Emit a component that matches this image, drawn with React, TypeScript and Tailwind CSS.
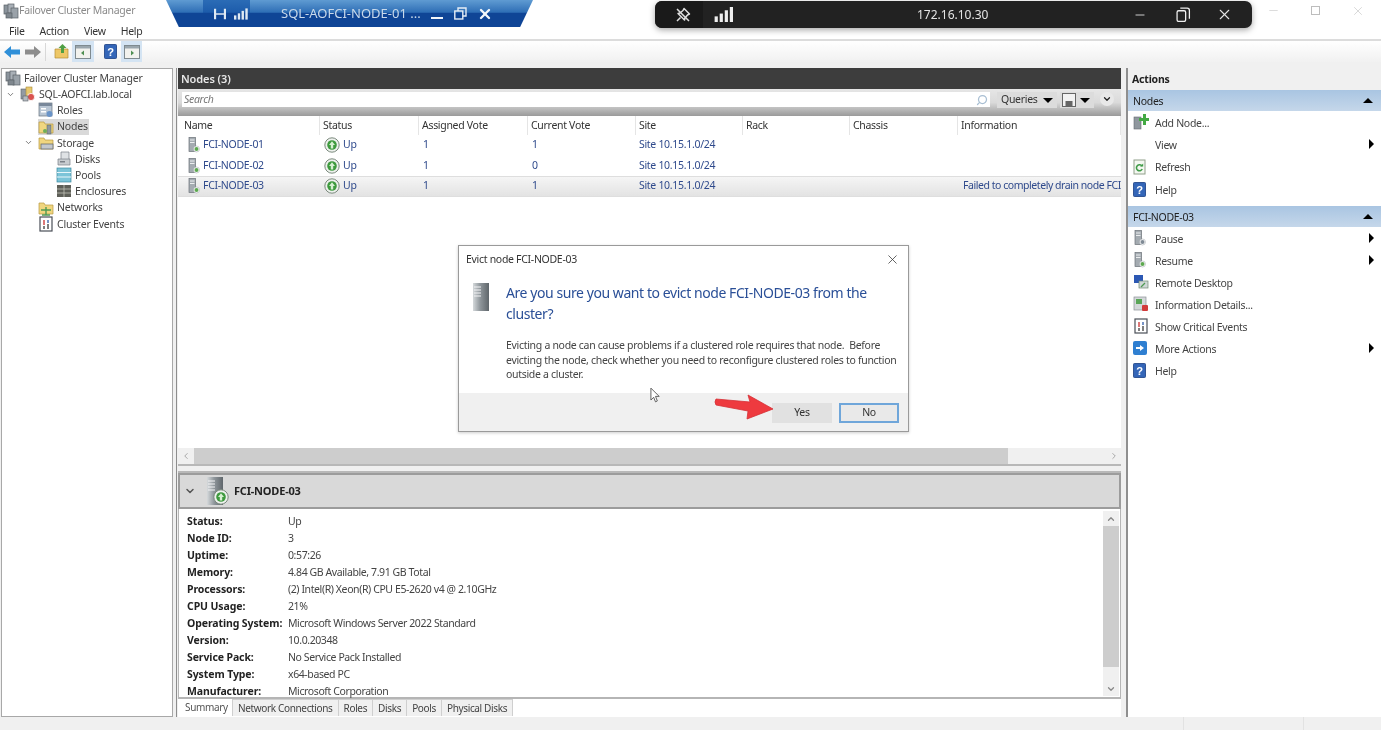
import { ChevronDown, ChevronUp, ChevronLeft, ChevronRight, X, Minus, Search } from "lucide-react";
import type { ReactNode } from "react";

// small shared drawings
function Signal({ className }: { className: string }) {
  return (
    <svg viewBox="0 0 20 16" className={className} fill="currentColor">
      <rect x="0" y="10" width="3.4" height="6" />
      <rect x="5.4" y="7" width="3.4" height="9" />
      <rect x="10.8" y="3.5" width="3.4" height="12.5" />
      <rect x="16.2" y="0" width="3.4" height="16" />
    </svg>
  );
}

function ClusterIcon() {
  return (
    <svg viewBox="0 0 16 16" className="h-4 w-4 shrink-0">
      <rect x="1" y="2" width="6" height="9" fill="#8b949c" stroke="#5b6168" strokeWidth="0.7" />
      <rect x="5" y="1" width="6" height="9" fill="#a9b0b7" stroke="#5b6168" strokeWidth="0.7" />
      <rect x="8" y="5" width="7" height="10" fill="#9aa2a9" stroke="#5b6168" strokeWidth="0.7" />
      <rect x="3" y="10" width="6" height="5" fill="#7f878e" stroke="#5b6168" strokeWidth="0.7" />
    </svg>
  );
}

function ClusterSiteIcon() {
  return (
    <svg viewBox="0 0 16 16" className="h-4 w-4 shrink-0">
      <rect x="1" y="3" width="6" height="10" fill="#929aa3" stroke="#5b6168" strokeWidth="0.6" />
      <rect x="6" y="1" width="6" height="10" fill="#e7c86e" stroke="#a98b36" strokeWidth="0.6" />
      <circle cx="11" cy="11" r="3.6" fill="#d9534f" stroke="#fff" strokeWidth="0.8" />
      <rect x="3" y="10" width="5" height="5" fill="#b5bbc1" stroke="#5b6168" strokeWidth="0.6" />
    </svg>
  );
}

function FolderBadge({ variant }: { variant: "nodes" | "storage" | "networks" }) {
  return (
    <svg viewBox="0 0 16 16" className="h-4 w-4 shrink-0">
      <path d="M1 3h5l1 2h8v9H1z" fill="#f0d67f" stroke="#b89a42" strokeWidth="0.7" />
      {variant === "nodes" && <rect x="9" y="6" width="4" height="9" fill="#8f979e" stroke="#566" strokeWidth="0.5" />}
      {variant === "nodes" && <circle cx="7" cy="12" r="2" fill="#6fae5a" />}
      {variant === "storage" && <rect x="3" y="9" width="12" height="5" fill="#c3c8cd" stroke="#5b6168" strokeWidth="0.7" />}
      {variant === "networks" && <path d="M8 7v8M4 15h8M3 10h10" stroke="#4f9a52" strokeWidth="1.4" fill="none" />}
    </svg>
  );
}

function RolesIcon() {
  return (
    <svg viewBox="0 0 16 16" className="h-4 w-4 shrink-0">
      <rect x="1" y="1" width="13" height="13" fill="#b9c6d4" stroke="#66717c" strokeWidth="0.7" />
      <rect x="1" y="1" width="13" height="3" fill="#79889a" />
      <rect x="3" y="6" width="5" height="1.5" fill="#fff" />
      <rect x="3" y="9" width="5" height="1.5" fill="#fff" />
      <circle cx="11.5" cy="12" r="3" fill="#6a94c8" />
    </svg>
  );
}

function DisksIcon() {
  return (
    <svg viewBox="0 0 16 16" className="h-4 w-4 shrink-0">
      <path d="M5 1h8v8H5z" fill="#dfe2e5" stroke="#7a8087" strokeWidth="0.7" />
      <path d="M2 8h12v6H2z" fill="#c8ccd0" stroke="#7a8087" strokeWidth="0.7" />
      <rect x="4" y="10" width="5" height="1.5" fill="#7a8087" />
    </svg>
  );
}

function PoolsIcon() {
  return (
    <svg viewBox="0 0 16 16" className="h-4 w-4 shrink-0">
      <rect x="1" y="1" width="14" height="14" fill="#7cc4d8" stroke="#3d8aa2" strokeWidth="0.7" />
      <path d="M1 5.5h14M1 10h14" stroke="#e8f6fa" strokeWidth="1" />
    </svg>
  );
}

function EnclosureIcon() {
  return (
    <svg viewBox="0 0 16 16" className="h-4 w-4 shrink-0">
      <rect x="1" y="2" width="14" height="12" fill="#5e5f58" />
      <path d="M1 6h14M1 10h14M8 2v12" stroke="#c2c2b8" strokeWidth="0.8" />
    </svg>
  );
}

function EventsIcon() {
  return (
    <svg viewBox="0 0 16 16" className="h-4 w-4 shrink-0">
      <rect x="2" y="1" width="12" height="14" fill="#fff" stroke="#4a4f57" strokeWidth="1.2" />
      <path d="M6 4v5" stroke="#d24b4b" strokeWidth="1.5" />
      <path d="M10 4v3" stroke="#4a70b5" strokeWidth="1.5" />
      <path d="M6 10v3M10 8v5" stroke="#555" strokeWidth="1.5" />
    </svg>
  );
}

function HelpIcon({ className = "h-4 w-4" }: { className?: string }) {
  return (
    <svg viewBox="0 0 14 16" className={`${className} shrink-0`}>
      <rect x="0.5" y="0.5" width="13" height="15" rx="1" fill="#3466b8" stroke="#26498a" />
      <text x="7" y="12.5" textAnchor="middle" fontSize="12" fontWeight="700" fill="#fff" fontFamily="Liberation Sans, sans-serif">?</text>
    </svg>
  );
}

function NodeIcon({ mark = "#5da84f" }: { mark?: string }) {
  return (
    <svg viewBox="0 0 14 16" className="h-4 w-[14px] shrink-0">
      <rect x="2" y="0.5" width="6.5" height="14" fill="#a4abb1" stroke="#6a7077" strokeWidth="0.7" />
      <path d="M3 3h4.5M3 5.5h4.5" stroke="#f4f5f6" strokeWidth="0.9" />
      <circle cx="9.5" cy="12" r="3" fill="#fff" stroke="#9aa0a6" strokeWidth="0.5" />
      <circle cx="9.5" cy="12" r="2" fill={mark} />
    </svg>
  );
}

function UpIcon() {
  return (
    <svg viewBox="0 0 16 16" className="h-4 w-4 shrink-0">
      <circle cx="8" cy="8" r="7.2" fill="#eef1ee" stroke="#7b8a7d" strokeWidth="1" />
      <circle cx="8" cy="8" r="4.8" fill="#3e9a3e" />
      <path d="M8 4.2 11 8H9.2v3.4H6.8V8H5z" fill="#d7f0d2" />
    </svg>
  );
}

function Tri({ dir }: { dir: "up" | "down" | "right" }) {
  if (dir === "up") return <span className="h-0 w-0 border-x-[5px] border-b-[5px] border-x-transparent border-b-black" />;
  if (dir === "down") return <span className="h-0 w-0 border-x-[5px] border-t-[5px] border-x-transparent border-t-black" />;
  return <span className="h-0 w-0 border-y-[5px] border-l-[5px] border-y-transparent border-l-black" />;
}

function TreeRow({ depth, icon, label, open, selected }: { depth: number; icon: ReactNode; label: string; open?: boolean; selected?: boolean }) {
  return (
    <div className="flex h-[16.2px] items-center" style={{ paddingLeft: depth }}>
      <span className="flex w-[15px] shrink-0 pl-[1px] text-[#555]">{open && <ChevronDown size={9} />}</span>
      <span className={`flex items-center gap-[3px] pr-[1px] ${selected ? "bg-[#d9d9d9]" : ""}`}>
        {icon}
        <span>{label}</span>
      </span>
    </div>
  );
}

const columns = [
  ["Name", "pl-[6px]"],
  ["Status", "pl-[3px]"],
  ["Assigned Vote", "pl-[3px]"],
  ["Current Vote", "pl-[3px]"],
  ["Site", "pl-[3px]"],
  ["Rack", "pl-[3px]"],
  ["Chassis", "pl-[3px]"],
  ["Information", "pl-[3px]"],
];

const nodes = [
  { name: "FCI-NODE-01", assigned: "1", current: "1", info: "" },
  { name: "FCI-NODE-02", assigned: "1", current: "0", info: "" },
  { name: "FCI-NODE-03", assigned: "1", current: "1", info: "Failed to completely drain node FCI" },
];

const details = [
  ["Status:", "Up"],
  ["Node ID:", "3"],
  ["Uptime:", "0:57:26"],
  ["Memory:", "4.84 GB Available, 7.91 GB Total"],
  ["Processors:", "(2) Intel(R) Xeon(R) CPU E5-2620 v4 @ 2.10GHz"],
  ["CPU Usage:", "21%"],
  ["Operating System:", "Microsoft Windows Server 2022 Standard"],
  ["Version:", "10.0.20348"],
  ["Service Pack:", "No Service Pack Installed"],
  ["System Type:", "x64-based PC"],
  ["Manufacturer:", "Microsoft Corporation"],
];

const tabs = ["Network Connections", "Roles", "Disks", "Pools", "Physical Disks"];

function ActionGroup({ title }: { title: string }) {
  return (
    <div className="flex h-[21px] items-center justify-between bg-gradient-to-b from-[#a9c5e2] to-[#c5d7ea] pl-[5px] pr-[8px] text-[#222]">
      <span className="pt-[2px]">{title}</span>
      <Tri dir="up" />
    </div>
  );
}

function ActionItem({ icon, label, more, tight }: { icon?: ReactNode; label: string; more?: boolean; tight?: boolean }) {
  return (
    <div className={`flex items-center pl-[5px] pr-[7px] ${tight ? "h-[22px]" : "h-[22.3px]"}`}>
      <span className="flex w-[22px] shrink-0 items-center">{icon}</span>
      <span className="flex-1 pt-[2px]">{label}</span>
      {more && <Tri dir="right" />}
    </div>
  );
}

function AddNodeIcon() {
  return (
    <svg viewBox="0 0 16 16" className="h-4 w-4 shrink-0">
      <rect x="1" y="3" width="7" height="12" fill="#8f979e" stroke="#646a70" strokeWidth="0.6" />
      <path d="M10 0v4H6v3h4v4h3V7h3V4h-3V0z" fill="#43a943" />
    </svg>
  );
}

function RefreshIcon() {
  return (
    <svg viewBox="0 0 14 16" className="h-4 w-[14px] shrink-0">
      <rect x="1" y="1" width="11" height="14" fill="#f4f8f1" stroke="#90a08a" />
      <path d="M9 7.2A3 3 0 1 0 9.2 10" fill="none" stroke="#3f9b47" strokeWidth="1.6" />
      <path d="M7 7.5h3.2V4.4z" fill="#3f9b47" />
    </svg>
  );
}

function RemoteIcon() {
  return (
    <svg viewBox="0 0 16 16" className="h-4 w-4 shrink-0">
      <rect x="1" y="1" width="9" height="8" fill="#2c58b4" />
      <rect x="6" y="7" width="9" height="7" fill="#cfd8d6" stroke="#6f8b72" strokeWidth="0.7" />
      <path d="M8 13l4-4" stroke="#4f9a52" strokeWidth="1.3" />
    </svg>
  );
}

function InfoDetailsIcon() {
  return (
    <svg viewBox="0 0 16 16" className="h-4 w-4 shrink-0">
      <rect x="1" y="1" width="12" height="13" fill="#d4d8da" stroke="#8b9196" strokeWidth="0.7" />
      <rect x="3" y="3" width="6" height="5" fill="#5aa658" />
      <rect x="9" y="9" width="6" height="6" rx="1" fill="#d23b3b" />
    </svg>
  );
}

function MoreIcon() {
  return (
    <svg viewBox="0 0 14 14" className="h-[14px] w-[14px] shrink-0">
      <rect width="14" height="14" rx="2" fill="#2f7fd1" />
      <path d="M3 6h4V4l4 3-4 3V8H3z" fill="#fff" />
    </svg>
  );
}

function PanelIcon({ dir }: { dir: "l" | "r" }) {
  return (
    <svg viewBox="0 0 16 14" className="h-[14px] w-4">
      <rect x="0.5" y="0.5" width="15" height="13" fill="#f2f2ee" stroke="#7f8a8f" />
      <rect x="1" y="1" width="14" height="2.5" fill="#9aa6ad" />
      <path d={dir === "l" ? "M9 5.5v5L6 8z" : "M7 5.5v5L10 8z"} fill="#4f8f52" />
    </svg>
  );
}

function BigServer({ className }: { className: string }) {
  return (
    <svg viewBox="0 0 18 28" className={className}>
      <defs>
        <linearGradient id="tower" x1="0" x2="1" y1="0" y2="0">
          <stop offset="0" stopColor="#d5d9db" />
          <stop offset="0.45" stopColor="#8f969b" />
          <stop offset="1" stopColor="#5f666b" />
        </linearGradient>
      </defs>
      <rect x="1" y="0" width="16" height="28" fill="url(#tower)" />
      <path d="M2 4h7M2 7h7M2 10h7M2 13h7" stroke="#f3f4f5" strokeWidth="1.2" />
    </svg>
  );
}

export default function App() {
  return (
    <div className="relative flex h-[730px] w-[1381px] flex-col overflow-hidden bg-[#f0f0f0] font-['Noto_Sans',sans-serif] text-[10.5px] tracking-[-0.3px] text-[#333] blur-[0.35px]">
      {/* title bar */}
      <div className="flex h-[21px] shrink-0 items-center bg-white pl-[3px] text-[#8b8b8b]">
        <ClusterIcon />
        <span>Failover Cluster Manager</span>
        <div className="ml-auto flex items-center gap-[31px] pr-[16px] text-[#bdbdbd]">
          <Minus size={13} strokeWidth={1} />
          <span className="h-[9px] w-[9px] border border-[#bdbdbd]" />
          <X size={14} strokeWidth={1} />
        </div>
      </div>
      {/* menu */}
      <div className="flex h-[20px] shrink-0 items-center gap-[15px] border-b-2 border-[#dcdcdc] bg-white pl-[9px] pt-[3px] text-[#333]">
        <span>File</span>
        <span>Action</span>
        <span>View</span>
        <span>Help</span>
      </div>
      {/* toolbar */}
      <div className="flex h-[21px] shrink-0 items-center bg-gradient-to-b from-white to-[#f1f1f1] pl-[4px]">
        <svg viewBox="0 0 16 12" className="h-[12px] w-4">
          <path d="M0 6l7-6v3.5h9v5H7V12z" fill="#2f8fd8" />
        </svg>
        <svg viewBox="0 0 16 12" className="ml-[5px] h-[12px] w-4">
          <path d="M16 6L9 0v3.5H0v5h9V12z" fill="#8d8d8d" />
        </svg>
        <span className="ml-[4px] h-[18px] w-px bg-[#d8d8d8]" />
        <svg viewBox="0 0 15 15" className="ml-[8px] h-[15px] w-[15px]">
          <path d="M1 5h13v9H1z" fill="#eec766" stroke="#b38e34" strokeWidth="0.7" />
          <path d="M7 9V4H4.5L8.5 0 12.500 4H10v5z" fill="#4f9f44" />
        </svg>
        <span className="ml-[3px] flex h-[21px] w-[22px] items-center justify-center bg-[#d4e4f3]">
          <PanelIcon dir="l" />
        </span>
        <span className="ml-[9px] flex w-[15px] justify-center">
          <HelpIcon className="h-[15px] w-[13px]" />
        </span>
        <span className="ml-[3px] flex h-[21px] w-[21px] items-center justify-center bg-[#d4e4f3]">
          <PanelIcon dir="r" />
        </span>
      </div>
      <div className="h-[6px] shrink-0 bg-[#f0f0f0]" />

      {/* panes */}
      <div className="flex h-[649px] shrink-0 items-stretch">
        {/* tree */}
        <div className="ml-[1px] w-[172px] shrink-0 border border-[#a8a8a8] bg-white pl-[3px] pt-[1px] text-[10.5px] leading-none tracking-[-0.2px] text-[#444]">
          <div className="flex h-[16.2px] items-center gap-[3px]">
            <ClusterIcon />
            <span>Failover Cluster Manager</span>
          </div>
          <TreeRow depth={0} open icon={<ClusterSiteIcon />} label="SQL-AOFCI.lab.local" />
          <TreeRow depth={18} icon={<RolesIcon />} label="Roles" />
          <TreeRow depth={18} selected icon={<FolderBadge variant="nodes" />} label="Nodes" />
          <TreeRow depth={18} open icon={<FolderBadge variant="storage" />} label="Storage" />
          <TreeRow depth={36} icon={<DisksIcon />} label="Disks" />
          <TreeRow depth={36} icon={<PoolsIcon />} label="Pools" />
          <TreeRow depth={36} icon={<EnclosureIcon />} label="Enclosures" />
          <TreeRow depth={18} icon={<FolderBadge variant="networks" />} label="Networks" />
          <TreeRow depth={18} icon={<EventsIcon />} label="Cluster Events" />
        </div>

        {/* centre */}
        <div className="ml-[3px] flex w-[945px] shrink-0 flex-col border-l border-[#8d8d8d] pl-[1px]">
          <div className="flex h-[21px] shrink-0 items-center bg-[#3d3d3d] pl-[3px] pt-[2px] text-[11px] font-semibold tracking-[-0.1px] text-[#e8e8e8]">Nodes (3)</div>
          <div className="flex h-[27px] shrink-0 items-start bg-gradient-to-b from-[#e6e6e6] via-[#dadada] to-[#9a9a9a] pl-[4px] pt-[3px]">
            <div className="flex h-[15px] w-[808px] items-center justify-between bg-white pl-[2px] pr-[2px] italic text-[#777]">
              <span>Search</span>
              <Search size={12} className="-scale-x-100 text-[#a9bfd3]" strokeWidth={2.5} />
            </div>
            <div className="ml-[7px] flex h-[16px] w-[60px] items-center justify-between bg-[#dcdcdc] pl-[4px] pr-[4px] text-[#333]">
              <span>Queries</span>
              <Tri dir="down" />
            </div>
            <div className="ml-[3px] flex h-[16px] w-[34px] items-center justify-between bg-[#dcdcdc] pl-[2px] pr-[4px]">
              <svg viewBox="0 0 14 14" className="h-[14px] w-[14px]">
                <rect x="0.5" y="0.5" width="13" height="13" fill="#f2f2f2" stroke="#666" />
                <rect x="3.500" y="8" width="7" height="5.500" fill="#666" />
              </svg>
              <Tri dir="down" />
            </div>
            <span className="ml-[6px] flex h-[14px] w-[14px] items-center justify-center rounded-full bg-[#e8e8e8]">
              <ChevronDown size={10} strokeWidth={3} className="text-[#222]" />
            </span>
          </div>
          {/* list */}
          <div className="flex h-[332px] shrink-0 flex-col bg-white">
            <div className="grid h-[19px] shrink-0 grid-cols-[142px_99px_109px_108px_107px_107px_108px_1fr] items-center text-[#333]">
              {columns.map(([label, pad]) => (
                <span key={label} className={`h-full border-r border-[#e5e5e5] leading-[19px] ${pad}`}>
                  {label}
                </span>
              ))}
            </div>
            {nodes.map((node, i) => (
              <div
                key={node.name}
                className={`grid h-[20.5px] shrink-0 grid-cols-[142px_99px_109px_108px_107px_107px_108px_1fr] items-center text-[#2f4a8c] ${
                  i === 2 ? "border-y border-[#dedede] bg-gradient-to-b from-[#f5f5f5] to-[#e3e3e3]" : ""
                }`}
              >
                <span className="flex items-center gap-[2px] pl-[9px]">
                  <NodeIcon />
                  {node.name}
                </span>
                <span className="flex items-center gap-[3px] pl-[4px]">
                  <UpIcon />
                  Up
                </span>
                <span className="pl-[4px]">{node.assigned}</span>
                <span className="pl-[4px]">{node.current}</span>
                <span className="pl-[3px]">Site 10.15.1.0/24</span>
                <span />
                <span />
                <span className="whitespace-nowrap pl-[5px] tracking-[-0.45px]">{node.info}</span>
              </div>
            ))}
          </div>
          {/* horizontal scrollbar */}
          <div className="flex h-[16px] shrink-0 items-center bg-[#f0f0f0] pr-[2px] text-[#9a9a9a]">
            <span className="flex w-[16px] justify-center">
              <ChevronLeft size={10} />
            </span>
            <span className="h-full w-[814px] bg-[#cdcdcd]" />
            <span className="flex-1" />
            <ChevronRight size={10} />
          </div>
          {/* splitter */}
          <div className="h-[9px] shrink-0 border-y-2 border-[#b8b8b8] bg-[#f0f0f0]" />
          {/* detail */}
          <div className="flex h-[36px] shrink-0 items-center border-x-2 border-y-2 border-[#9c9c9c] bg-[#d9d9d9] pl-[4px]">
            <ChevronDown size={12} strokeWidth={3} className="text-[#555]" />
            <span className="relative ml-[10px] flex">
              <BigServer className="h-[28px] w-[18px]" />
              <span className="absolute -right-[5px] bottom-0">
                <UpIcon />
              </span>
            </span>
            <span className="ml-[10px] text-[11px] font-bold tracking-[-0.2px] text-[#222]">FCI-NODE-03</span>
          </div>
          <div className="flex h-[190px] shrink-0 border-x border-b-2 border-[#b5b5b5] bg-white">
            <div className="flex-1 pl-[8px] pt-[4px]">
              {details.map(([k, v]) => (
                <div key={k} className="flex h-[17px] items-center">
                  <span className="w-[101px] shrink-0 font-bold tracking-[-0.1px] text-[#222]">{k}</span>
                  <span className="tracking-[-0.4px] text-[#444]">{v}</span>
                </div>
              ))}
            </div>
            <div className="mb-[1px] mr-[1px] mt-[2px] flex w-[16px] flex-col items-center bg-[#f0f0f0] text-[#888]">
              <span className="flex h-[15px] items-center">
                <ChevronUp size={10} strokeWidth={3} />
              </span>
              <span className="h-[141px] w-full bg-[#cdcdcd]" />
              <span className="mt-auto flex h-[15px] items-center">
                <ChevronDown size={10} strokeWidth={3} />
              </span>
            </div>
          </div>
          {/* tabs */}
          <div className="flex h-[17px] shrink-0 items-stretch bg-white pl-[3px] text-[10px] tracking-[-0.35px]">
            <span className="flex w-[52px] items-center justify-center border-r border-[#cfcfcf] text-[#555]">Summary</span>
            {tabs.map((tab) => (
              <span key={tab} className="flex items-center border-r border-t border-[#cfcfcf] bg-[#f0f0f0] px-[5px] text-[#444]">
                {tab}
              </span>
            ))}
          </div>
          <div className="flex-1 bg-white" />
        </div>

        {/* actions */}
        <div className="ml-[5px] flex flex-1 flex-col border-l-2 border-[#8f8f8f] bg-white text-[10.5px] leading-none text-[#444]">
          <div className="flex h-[22px] shrink-0 items-center bg-[#f0f0f0] pl-[4px] font-bold tracking-[-0.2px] text-[#222]">Actions</div>
          <ActionGroup title="Nodes" />
          <ActionItem icon={<AddNodeIcon />} label="Add Node..." />
          <ActionItem label="View" more />
          <ActionItem icon={<RefreshIcon />} label="Refresh" />
          <ActionItem icon={<HelpIcon className="h-[15px] w-[13px]" />} label="Help" />
          <div className="h-[6px] shrink-0" />
          <ActionGroup title="FCI-NODE-03" />
          <ActionItem tight icon={<NodeIcon mark="#7f8a95" />} label="Pause" more />
          <ActionItem tight icon={<NodeIcon />} label="Resume" more />
          <ActionItem tight icon={<RemoteIcon />} label="Remote Desktop" />
          <ActionItem tight icon={<InfoDetailsIcon />} label="Information Details..." />
          <ActionItem tight icon={<EventsIcon />} label="Show Critical Events" />
          <ActionItem tight icon={<MoreIcon />} label="More Actions" more />
          <ActionItem tight icon={<HelpIcon className="h-[15px] w-[13px]" />} label="Help" />
        </div>
      </div>

      {/* status bar */}
      <div className="flex flex-1 justify-end bg-[#f0f0f0]">
        <span className="w-[120px] border-l border-[#e2e2e2]" />
        <span className="w-[78px] border-l border-[#e2e2e2]" />
      </div>

      {/* remote session bar, blue */}
      <div className="absolute left-[166px] top-0 flex h-[27px] w-[367px] items-center bg-gradient-to-b from-[#5f9bd2] from-0% via-[#2f6fb6] via-45% to-[#0f4596] to-50% pl-[37px] text-[13px] font-normal tracking-normal text-[#c9d9ea] [clip-path:polygon(0_0,100%_0,96.500%_100%,3.500%_100%)]">
        <span className="flex h-full w-[47px] items-center bg-gradient-to-b from-[#2b6cb6] via-[#1d5cab] via-45% to-[#0f4596] to-50% pl-[11px]">
          <svg viewBox="0 0 14 12" className="h-[12px] w-[12px] text-[#dfe9f3]" fill="currentColor">
            <path d="M0 0h2.500v12H0zM11.500 0H14v12h-2.500zM2.500 5h9v2h-9z" />
          </svg>
          <Signal className="ml-[8px] h-[12px] w-[14px] text-[#dfe9f3]" />
        </span>
        <span className="ml-[31px] whitespace-nowrap">SQL-AOFCI-NODE-01 ...</span>
        <span className="ml-[10px] mt-[9px] h-[2px] w-[12px] bg-[#f2f6fa]" />
        <svg viewBox="0 0 13 13" className="ml-[11px] h-[13px] w-[13px]" fill="none" stroke="#e7eef6" strokeWidth="1.400">
          <rect x="0.800" y="4" width="8" height="8" />
          <path d="M4 4V1h8v8H9" />
        </svg>
        <X size={16} strokeWidth={3.500} className="ml-[10px] text-[#f4f8fb]" />
      </div>

      {/* remote session bar, dark */}
      <div className="absolute left-[655px] top-[1px] flex h-[27px] w-[597px] items-center overflow-hidden rounded-[7px] bg-[#222222] text-[12px] tracking-normal text-[#e4e4e4] shadow-[0_2px_6px_rgba(0,0,0,0.35)]">
        <div className="flex h-full w-[48px] items-center justify-end bg-[#1a1a1a] pr-[12px]">
          <svg viewBox="0 0 16 16" className="h-4 w-4" fill="none" stroke="#dedede" strokeWidth="1.500" strokeLinejoin="round">
            <path d="M9 1.500 14.500 7 12.500 8 10 11 9.500 13 3 6.500 5 6 8 3.500z" />
            <path d="M5.500 10.500 2 14M2 2l12 12" />
          </svg>
        </div>
        <Signal className="ml-[11px] h-[15px] w-[20px] text-[#efefef]" />
        <span className="ml-[183px] w-[60px] whitespace-nowrap">172.16.10.30</span>
        <Minus size={14} strokeWidth={1.500} className="ml-[156px]" />
        <svg viewBox="0 0 14 14" className="ml-[29px] h-[15px] w-[15px]" fill="none" stroke="#eeeeee" strokeWidth="1.200">
          <rect x="1" y="3.500" width="8" height="10" rx="1.500" />
          <path d="M4 1h6.500A2 2 0 0 1 12.500 3v8" />
        </svg>
        <X size={17} strokeWidth={1.500} className="ml-[25px]" />
      </div>

      {/* evict dialog */}
      <div className="absolute left-[458px] top-[245px] flex h-[187px] w-[451px] flex-col border border-[#9a9a9a] bg-white text-[#333] shadow-[0_1px_3px_rgba(0,0,0,0.2)]">
        <div className="flex h-[27px] shrink-0 items-center justify-between pl-[7px] pr-[8px] text-[10.5px]">
          <span>Evict node FCI-NODE-03</span>
          <X size={15} strokeWidth={1.200} />
        </div>
        <div className="flex flex-1">
          <div className="w-[47px] shrink-0 pl-[13px] pt-[10px]">
            <BigServer className="h-[28px] w-[18px]" />
          </div>
          <div className="flex-1 pr-[6px]">
            <div className="pt-[9px] text-[14px] leading-[21px] tracking-[-0.43px] text-[#2a4f97]">
              Are you sure you want to evict node FCI-NODE-03 from the cluster?
            </div>
            <div className="whitespace-pre-wrap pt-[14px] text-[10.5px] leading-[14.500px] tracking-[-0.3px] text-[#444]">
              Evicting a node can cause problems if a clustered role requires that node.  Before evicting the node, check whether you need to reconfigure clustered roles to function outside a cluster.
            </div>
          </div>
        </div>
        <div className="flex h-[38px] shrink-0 items-center justify-end gap-[7px] bg-[#f0f0f0] pr-[9px] pt-[2px] text-[#333]">
          <span className="flex h-[20px] w-[60px] items-center justify-center bg-[#e1e1e1]">Yes</span>
          <span className="flex h-[20px] w-[60px] items-center justify-center border-2 border-[#6fa6da] bg-[#e9e9e9]">No</span>
        </div>
      </div>

      {/* red arrow callout */}
      <svg viewBox="0 0 60 28" className="absolute left-[714px] top-[394px] h-[28px] w-[60px]">
        <path d="M2 5 L36 8 L34 1 L59 15 L33 25 L34 17 L2 11 Q0 8 2 5Z" fill="#ee3a3f" stroke="#d63036" strokeWidth="0.8" strokeLinejoin="round" />
      </svg>

      {/* mouse pointer */}
      <svg viewBox="0 0 12 17" className="absolute left-[650px] top-[387px] h-[16px] w-[11px]">
        <path d="M1 1v13l3-3 2 5 2-1-2-5h4z" fill="#fff" stroke="#555" strokeWidth="1" />
      </svg>
    </div>
  );
}
